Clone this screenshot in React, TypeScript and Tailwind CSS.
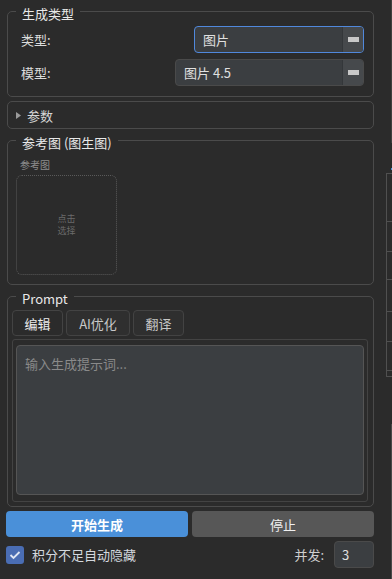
import React from "react"

const groupBox = "ml-[1px] w-[367px] rounded-[5px] border border-[#4b4b4b]"
const legendCls =
  "ml-[8px] px-[6px] pt-[5px] text-[13px] leading-[17px] text-[#e8e8e8]"

function Combo({
  value,
  focused,
  width,
}: {
  value: string
  focused?: boolean
  width: string
}) {
  return (
    <div
      className={`flex h-[27px] items-stretch overflow-hidden rounded-[4px] border bg-[#3b3e41] ${
        focused ? "border-[#5088dc]" : "border-[#4a4a4a]"
      } ${width}`}
    >
      <span className="flex flex-1 items-center pl-[8px] text-[13px] leading-[17px] text-[#e0e0e0]">
        {value}
      </span>
      <span className="flex w-[21px] items-center justify-center border-l border-[#34373a] bg-[#46494c]">
        <span className="h-[5px] w-[11px] bg-[#c8c8c8]" />
      </span>
    </div>
  )
}

function Tab({
  label,
  active,
  width,
}: {
  label: string
  active?: boolean
  width: string
}) {
  return (
    <div
      className={`flex h-[26px] items-center justify-center rounded-[4px] border border-[#434343] text-[13px] leading-[17px] ${
        active ? "bg-[#2b2b2b] text-[#ececec]" : "bg-[#2f2f2f] text-[#c8c8c8]"
      } ${width}`}
    >
      {label}
    </div>
  )
}

export default function App() {
  return (
    <div className="flex h-[579px] w-[392px] overflow-hidden bg-[#2b2b2b] font-['Noto_Sans_CJK_SC','Noto_Sans',sans-serif] text-[#dcdcdc]">
      <div className="ml-[6px] flex w-[368px] flex-col">
        {/* 生成类型 */}
        <fieldset className={groupBox}>
          <legend className={legendCls}>生成类型</legend>
          <div className="flex flex-col gap-[6px] pt-[4px] pr-[9px] pb-[10px] pl-[13px]">
            <div className="flex items-center justify-between">
              <span className="text-[13px] leading-[17px]">类型:</span>
              <Combo value="图片" focused width="w-[170px]" />
            </div>
            <div className="flex items-center justify-between">
              <span className="text-[13px] leading-[17px]">模型:</span>
              <Combo value="图片 4.5" width="w-[189px]" />
            </div>
          </div>
        </fieldset>

        {/* 参数 */}
        <div className="mt-[4px] ml-[1px] flex h-[28px] w-[367px] items-center rounded-[5px] border border-[#4b4b4b] pl-[8px]">
          <svg width="5" height="7" viewBox="0 0 5 7" className="mr-[6px]">
            <polygon points="0,0 5,3.5 0,7" fill="#9a9a9a" />
          </svg>
          <span className="text-[13px] leading-[17px] text-[#d6d6d6]">参数</span>
        </div>

        {/* 参考图 */}
        <fieldset className={groupBox}>
          <legend className={legendCls}>参考图 (图生图)</legend>
          <div className="flex flex-col items-start pt-[8px] pb-[9px] pl-[8px]">
            <span className="ml-[4px] text-[10px] leading-[12px] text-[#8c8c8c]">参考图</span>
            <div className="mt-[4px] flex h-[100px] w-[101px] flex-col items-center justify-center rounded-[6px] border border-dotted border-[#5a5a5a] text-[9px] leading-[12px] text-[#6a6a6a]">
              <span>点击</span>
              <span>选择</span>
            </div>
          </div>
        </fieldset>

        {/* Prompt */}
        <fieldset className={groupBox}>
          <legend className={legendCls}>Prompt</legend>
          <div className="flex flex-col pt-[3px] pr-[5px] pb-[4px] pl-[4px]">
            <div className="flex gap-[3px]">
              <Tab label="编辑" active width="w-[51px]" />
              <Tab label="AI优化" width="w-[64px]" />
              <Tab label="翻译" width="w-[51px]" />
            </div>
            <div className="mt-[3px] rounded-[3px] border border-[#434343] pt-[5px] pr-[3px] pb-[6px] pl-[3px]">
              <textarea
                readOnly
                placeholder="输入生成提示词..."
                className="block h-[150px] w-full resize-none rounded-[4px] border border-[#555] bg-[#3b3e41] pt-[9px] pl-[8px] text-[13px] leading-[18px] text-[#dcdcdc] outline-none placeholder:text-[#8a8a8a]"
              />
            </div>
          </div>
        </fieldset>

        {/* Buttons */}
        <div className="mt-[4px] flex gap-[4px]">
          <button className="flex h-[26px] flex-1 items-center justify-center rounded-[4px] bg-[#4a90d9] text-[13px] leading-[17px] font-bold text-white">
            开始生成
          </button>
          <button className="flex h-[26px] flex-1 items-center justify-center rounded-[4px] bg-[#575757] text-[13px] leading-[17px] text-[#f0f0f0]">
            停止
          </button>
        </div>

        {/* Bottom options */}
        <div className="mt-[4px] flex h-[27px] items-center">
          <span className="flex h-[18px] w-[18px] items-center justify-center rounded-[3px] bg-[#4a6db3]">
            <svg width="12" height="10" viewBox="0 0 12 10">
              <polyline
                points="1.5,5 4.5,8 10.5,2"
                fill="none"
                stroke="#dfe6f3"
                strokeWidth="1.8"
              />
            </svg>
          </span>
          <span className="ml-[8px] text-[13px] leading-[17px] text-[#d4d8de]">积分不足自动隐藏</span>
          <span className="ml-auto text-[13px] leading-[17px] text-[#cfcfcf]">并发:</span>
          <span className="ml-[10px] flex h-[27px] w-[40px] items-center rounded-[4px] border border-[#4a4a4a] bg-[#3b3e41] pl-[7px] text-[13px] leading-[17px] text-[#e0e0e0]">
            3
          </span>
        </div>
      </div>

      {/* clipped neighbouring panel */}
      <div className="ml-[12px] flex w-[6px] flex-col">
        <div className="h-[143px] border-r border-[#404040]" />
        <div className="h-[25px]" />
        <div className="flex h-[2px] justify-end">
          <span className="w-[1px] bg-[#4a90d9]" />
        </div>
        <div className="h-[3px]" />
        <div className="border-t border-l border-[#505050]">
          <div className="h-[48px] border-b border-[#505050]" />
          <div className="h-[30px] border-b border-[#505050]" />
          <div className="h-[28px] border-b border-[#505050]" />
          <div className="h-[32px] border-b border-[#505050]" />
          <div className="h-[30px] border-b border-[#505050]" />
          <div className="h-[29px] border-b border-[#505050]" />
          <div className="h-[6px] border-b border-[#505050]" />
        </div>
        <div className="h-[47px]" />
        <div className="flex-1 border-r border-[#4a4a4a]" />
      </div>
    </div>
  )
}
